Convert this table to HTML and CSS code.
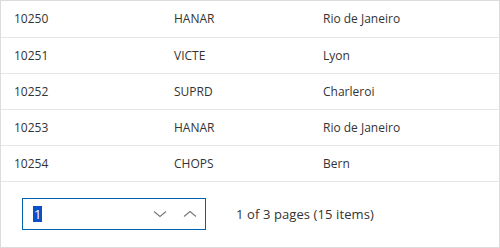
FILE: index.html
```html
<!DOCTYPE html>
<html lang="en">
<head>
    <meta charset="UTF-8">
    <title>Orders</title>
    <link rel="stylesheet" href="styles.css">
</head>
<body>
    <div class="grid">
        <table class="grid-table">
            <tbody>
                <tr><td class="col-id">10250</td><td class="col-customer">HANAR</td><td>Rio de Janeiro</td></tr>
                <tr><td class="col-id">10251</td><td class="col-customer">VICTE</td><td>Lyon</td></tr>
                <tr><td class="col-id">10252</td><td class="col-customer">SUPRD</td><td>Charleroi</td></tr>
                <tr><td class="col-id">10253</td><td class="col-customer">HANAR</td><td>Rio de Janeiro</td></tr>
                <tr><td class="col-id">10254</td><td class="col-customer">CHOPS</td><td>Bern</td></tr>
            </tbody>
        </table>

        <div class="pager">
            <div class="page-input">
                <span class="page-value"><span class="selected">1</span></span>
                <span class="spin-btn">
                    <svg width="14" height="8" viewBox="0 0 14 8"><path d="M1 1.5 L7 6.5 L13 1.5" fill="none" stroke="#777" stroke-width="1.1"/></svg>
                </span>
                <span class="spin-btn">
                    <svg width="14" height="8" viewBox="0 0 14 8"><path d="M1 6.5 L7 1.5 L13 6.5" fill="none" stroke="#777" stroke-width="1.1"/></svg>
                </span>
            </div>
            <span class="pager-info">1 of 3 pages (15 items)</span>
        </div>
    </div>
</body>
</html>
```

FILE: styles.css
```css
* {
    margin: 0;
    padding: 0;
    box-sizing: border-box;
}

body {
    font-family: "Open Sans", "Noto Sans", sans-serif;
    font-size: 12px;
    color: #333;
    background: white;
}

.grid {
    width: 500px;
    height: 248px;
    border: 1px solid #dcdcdc;
    display: flex;
    flex-direction: column;
}

.grid-table {
    width: 100%;
    border-collapse: collapse;
}

.grid-table td {
    height: 36px;
    padding: 0 13px;
    border-bottom: 1px solid #e6e6e6;
    vertical-align: middle;
}

.col-id {
    width: 160px;
}

.col-customer {
    width: 149px;
}

.pager {
    flex: 1;
    display: flex;
    align-items: center;
    padding: 0 21px;
    gap: 30px;
}

.page-input {
    width: 184px;
    height: 32px;
    border: 1px solid #0063b1;
    display: flex;
    align-items: center;
    padding-left: 10px;
}

.page-value {
    flex: 1;
    font-size: 13px;
}

.selected {
    display: inline-block;
    background: #0a50c8;
    color: white;
    line-height: 16px;
    padding: 0 1px;
}

.spin-btn {
    width: 30px;
    height: 30px;
    display: flex;
    align-items: center;
    justify-content: center;
}

.pager-info {
    font-size: 13px;
    letter-spacing: 0.1px;
}
```
